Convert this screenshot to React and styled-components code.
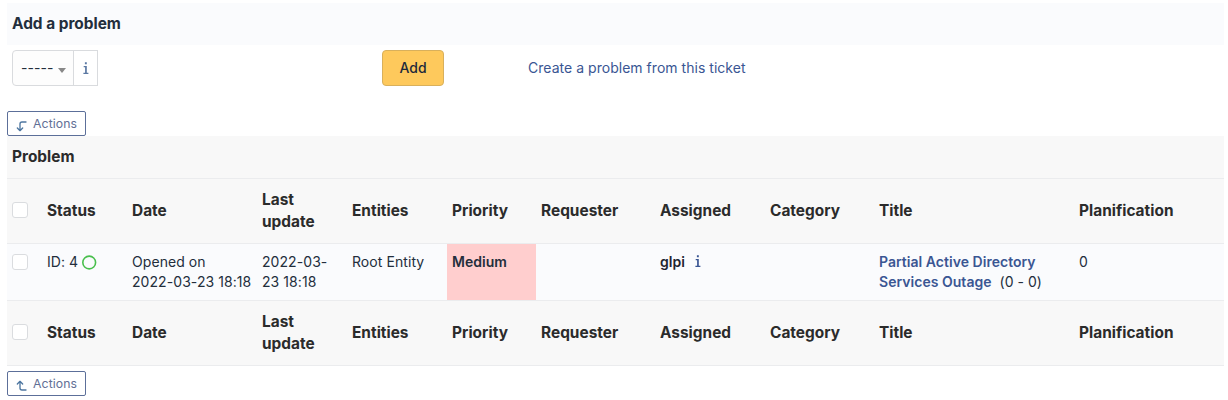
import React from "react";
import styled, { createGlobalStyle } from "styled-components";

const GlobalStyle = createGlobalStyle`
  * { box-sizing: border-box; }
  body {
    margin: 0;
    background: #fff;
    color: #232e3c;
    font-family: Inter, "Liberation Sans", sans-serif;
    font-size: 14px;
    line-height: 20px;
    letter-spacing: 0.03px;
  }
`;

const Page = styled.main`
  padding: 3px 4px 0 7px;
`;

const FormTitle = styled.h2`
  margin: 0;
  height: 42px;
  padding: 0 5px;
  background: #fafbfd;
  font-size: 15.4px;
  font-weight: 700;
  line-height: 41px;
  letter-spacing: 0;
`;

const FormRow = styled.div`
  display: grid;
  grid-template-columns: 370px 146px 1fr;
  align-items: center;
  height: 46px;
  padding: 0 5px;
  margin-bottom: 20px;
`;

const SelectGroup = styled.div`
  display: flex;
  height: 36px;
`;

const Select = styled.div`
  display: flex;
  align-items: center;
  gap: 5px;
  width: 62px;
  padding: 0 7px 0 8px;
  border: 1px solid #d9dbde;
  border-radius: 4px 0 0 4px;
  background: #fdfdfd;
  white-space: nowrap;
`;

const Caret = styled.span`
  margin-top: 4px;
  border: 4px solid transparent;
  border-top: 5px solid #888;
  border-bottom: 0;
`;

const InfoBox = styled.div`
  display: flex;
  align-items: center;
  justify-content: center;
  width: 25px;
  margin-left: -1px;
  border: 1px solid #d9dbde;
  color: #5b78a3;
`;

const AddButton = styled.button`
  width: 62px;
  height: 36px;
  padding: 0;
  border: 1px solid #d9b05b;
  border-radius: 4px;
  background: #fec95c;
  color: #1e293b;
  font: 500 14px/20px Inter, sans-serif;
`;

const Link = styled.a`
  color: #3a5693;
  font-weight: ${(p) => (p.$strong ? 600 : 400)};
`;

const ActionsButton = styled.button`
  display: flex;
  align-items: center;
  width: 79px;
  height: 25px;
  margin-top: ${(p) => p.$top || 0}px;
  padding: 0 0 0 6px;
  border: 1px solid #5c6f99;
  border-radius: 2px;
  background: #fff;
  color: #626f95;
  font: 400 12.25px/18px Inter, sans-serif;
  letter-spacing: 0.1px;

  svg {
    margin: 5px 3px 0 0;
    color: #4d76a0;
  }
`;

const Table = styled.table`
  width: 1217px;
  table-layout: fixed;
  border-collapse: separate;
  border-spacing: 0;
`;

const HeadRow = styled.tr`
  height: ${(p) => p.$height}px;
  background: #f8f8f8;
`;

const HeadCell = styled.th`
  padding: 0 5px 1px;
  border-bottom: 1px solid #ebecee;
  color: #2b2b2b;
  font-size: 15.4px;
  font-weight: 700;
  line-height: 22px;
  letter-spacing: 0.02px;
  text-align: left;
  vertical-align: middle;
`;

const DataRow = styled.tr`
  height: 57px;
  background: #fafbfd;
`;

const Cell = styled.td`
  padding: 8px 5px 0;
  border-bottom: 1px solid #ebecee;
  vertical-align: top;
  background: ${(p) => (p.$priority ? "#ffcece" : "transparent")};
  font-weight: ${(p) => (p.$strong ? 600 : 400)};
`;

const DateText = styled.span`
  letter-spacing: 0.07px;
`;

const Checkbox = styled.input.attrs({ type: "checkbox" })`
  appearance: none;
  display: block;
  width: 16px;
  height: 16px;
  margin: ${(p) => p.$top || 0}px 0 ${(p) => p.$bottom || 0}px;
  border: 1px solid #dadcdf;
  border-radius: 3px;
  background: #fff;
`;

const StatusLine = styled.span`
  display: flex;
  align-items: center;
  gap: 4px;
`;

const StatusRing = () => (
  <svg width="15" height="15" viewBox="0 0 15 15" fill="none" stroke="#49bf4d" strokeWidth="1.6">
    <circle cx="7.2" cy="7.5" r="6.4" />
  </svg>
);

const Assignee = styled.span`
  display: flex;
  align-items: center;
  gap: 10px;
  color: #1f2430;
`;

const InfoIcon = () => (
  <svg width="6" height="12" viewBox="0 0 6 12" fill="currentColor">
    <path d="M1.9 0.2h1.9v2H1.9zM0.7 4H3.8v6.7h1.6V12H0.4v-1.3h1.7V5.3H0.7z" />
  </svg>
);

const CornerArrow = ({ up }) => (
  <svg width="16" height="16" viewBox="0 0 24 24" fill="none" stroke="currentColor" strokeWidth="2" strokeLinecap="round" strokeLinejoin="round">
    <path d={up ? "M18 18h-6a3 3 0 0 1-3-3V5L5 9m8 0L9 5" : "M18 6h-6a3 3 0 0 0-3 3v10l-4-4m8 0l-4 4"} />
  </svg>
);

const widths = [35, 85, 130, 90, 100, 89, 119, 110, 109, 200, 150];
const labels = ["Status", "Date", "Last update", "Entities", "Priority", "Requester", "Assigned", "Category", "Title", "Planification"];

const ColumnHeadings = ({ height }) => (
  <HeadRow $height={height}>
    <HeadCell><Checkbox $bottom={2} aria-label="Select all" /></HeadCell>
    {labels.map((label) => <HeadCell key={label}>{label}</HeadCell>)}
  </HeadRow>
);

export default function App() {
  return (
    <Page>
      <GlobalStyle />
      <FormTitle>Add a problem</FormTitle>
      <FormRow>
        <SelectGroup>
          <Select>-----<Caret /></Select>
          <InfoBox><InfoIcon /></InfoBox>
        </SelectGroup>
        <div><AddButton>Add</AddButton></div>
        <Link>Create a problem from this ticket</Link>
      </FormRow>
      <ActionsButton><CornerArrow />Actions</ActionsButton>
      <Table>
        <colgroup>{widths.map((w, i) => <col key={i} width={w} />)}</colgroup>
        <thead>
          <HeadRow $height={43}><HeadCell colSpan={11}>Problem</HeadCell></HeadRow>
          <ColumnHeadings height={65} />
        </thead>
        <tbody>
          <DataRow>
            <Cell><Checkbox $top={2} aria-label="Select problem 4" /></Cell>
            <Cell><StatusLine>ID: 4<StatusRing /></StatusLine></Cell>
            <Cell><DateText>Opened on<br />2022-03-23 18:18</DateText></Cell>
            <Cell><DateText>2022-03-<br />23 18:18</DateText></Cell>
            <Cell><DateText>Root Entity</DateText></Cell>
            <Cell $priority $strong>Medium</Cell>
            <Cell />
            <Cell $strong><Assignee>glpi<Link as="span"><InfoIcon /></Link></Assignee></Cell>
            <Cell />
            <Cell><Link $strong>Partial Active Directory<br />Services Outage</Link>{"\u00a0 (0 - 0)"}</Cell>
            <Cell>0</Cell>
          </DataRow>
        </tbody>
        <tfoot><ColumnHeadings height={65} /></tfoot>
      </Table>
      <ActionsButton $top={5}><CornerArrow up />Actions</ActionsButton>
    </Page>
  );
}
